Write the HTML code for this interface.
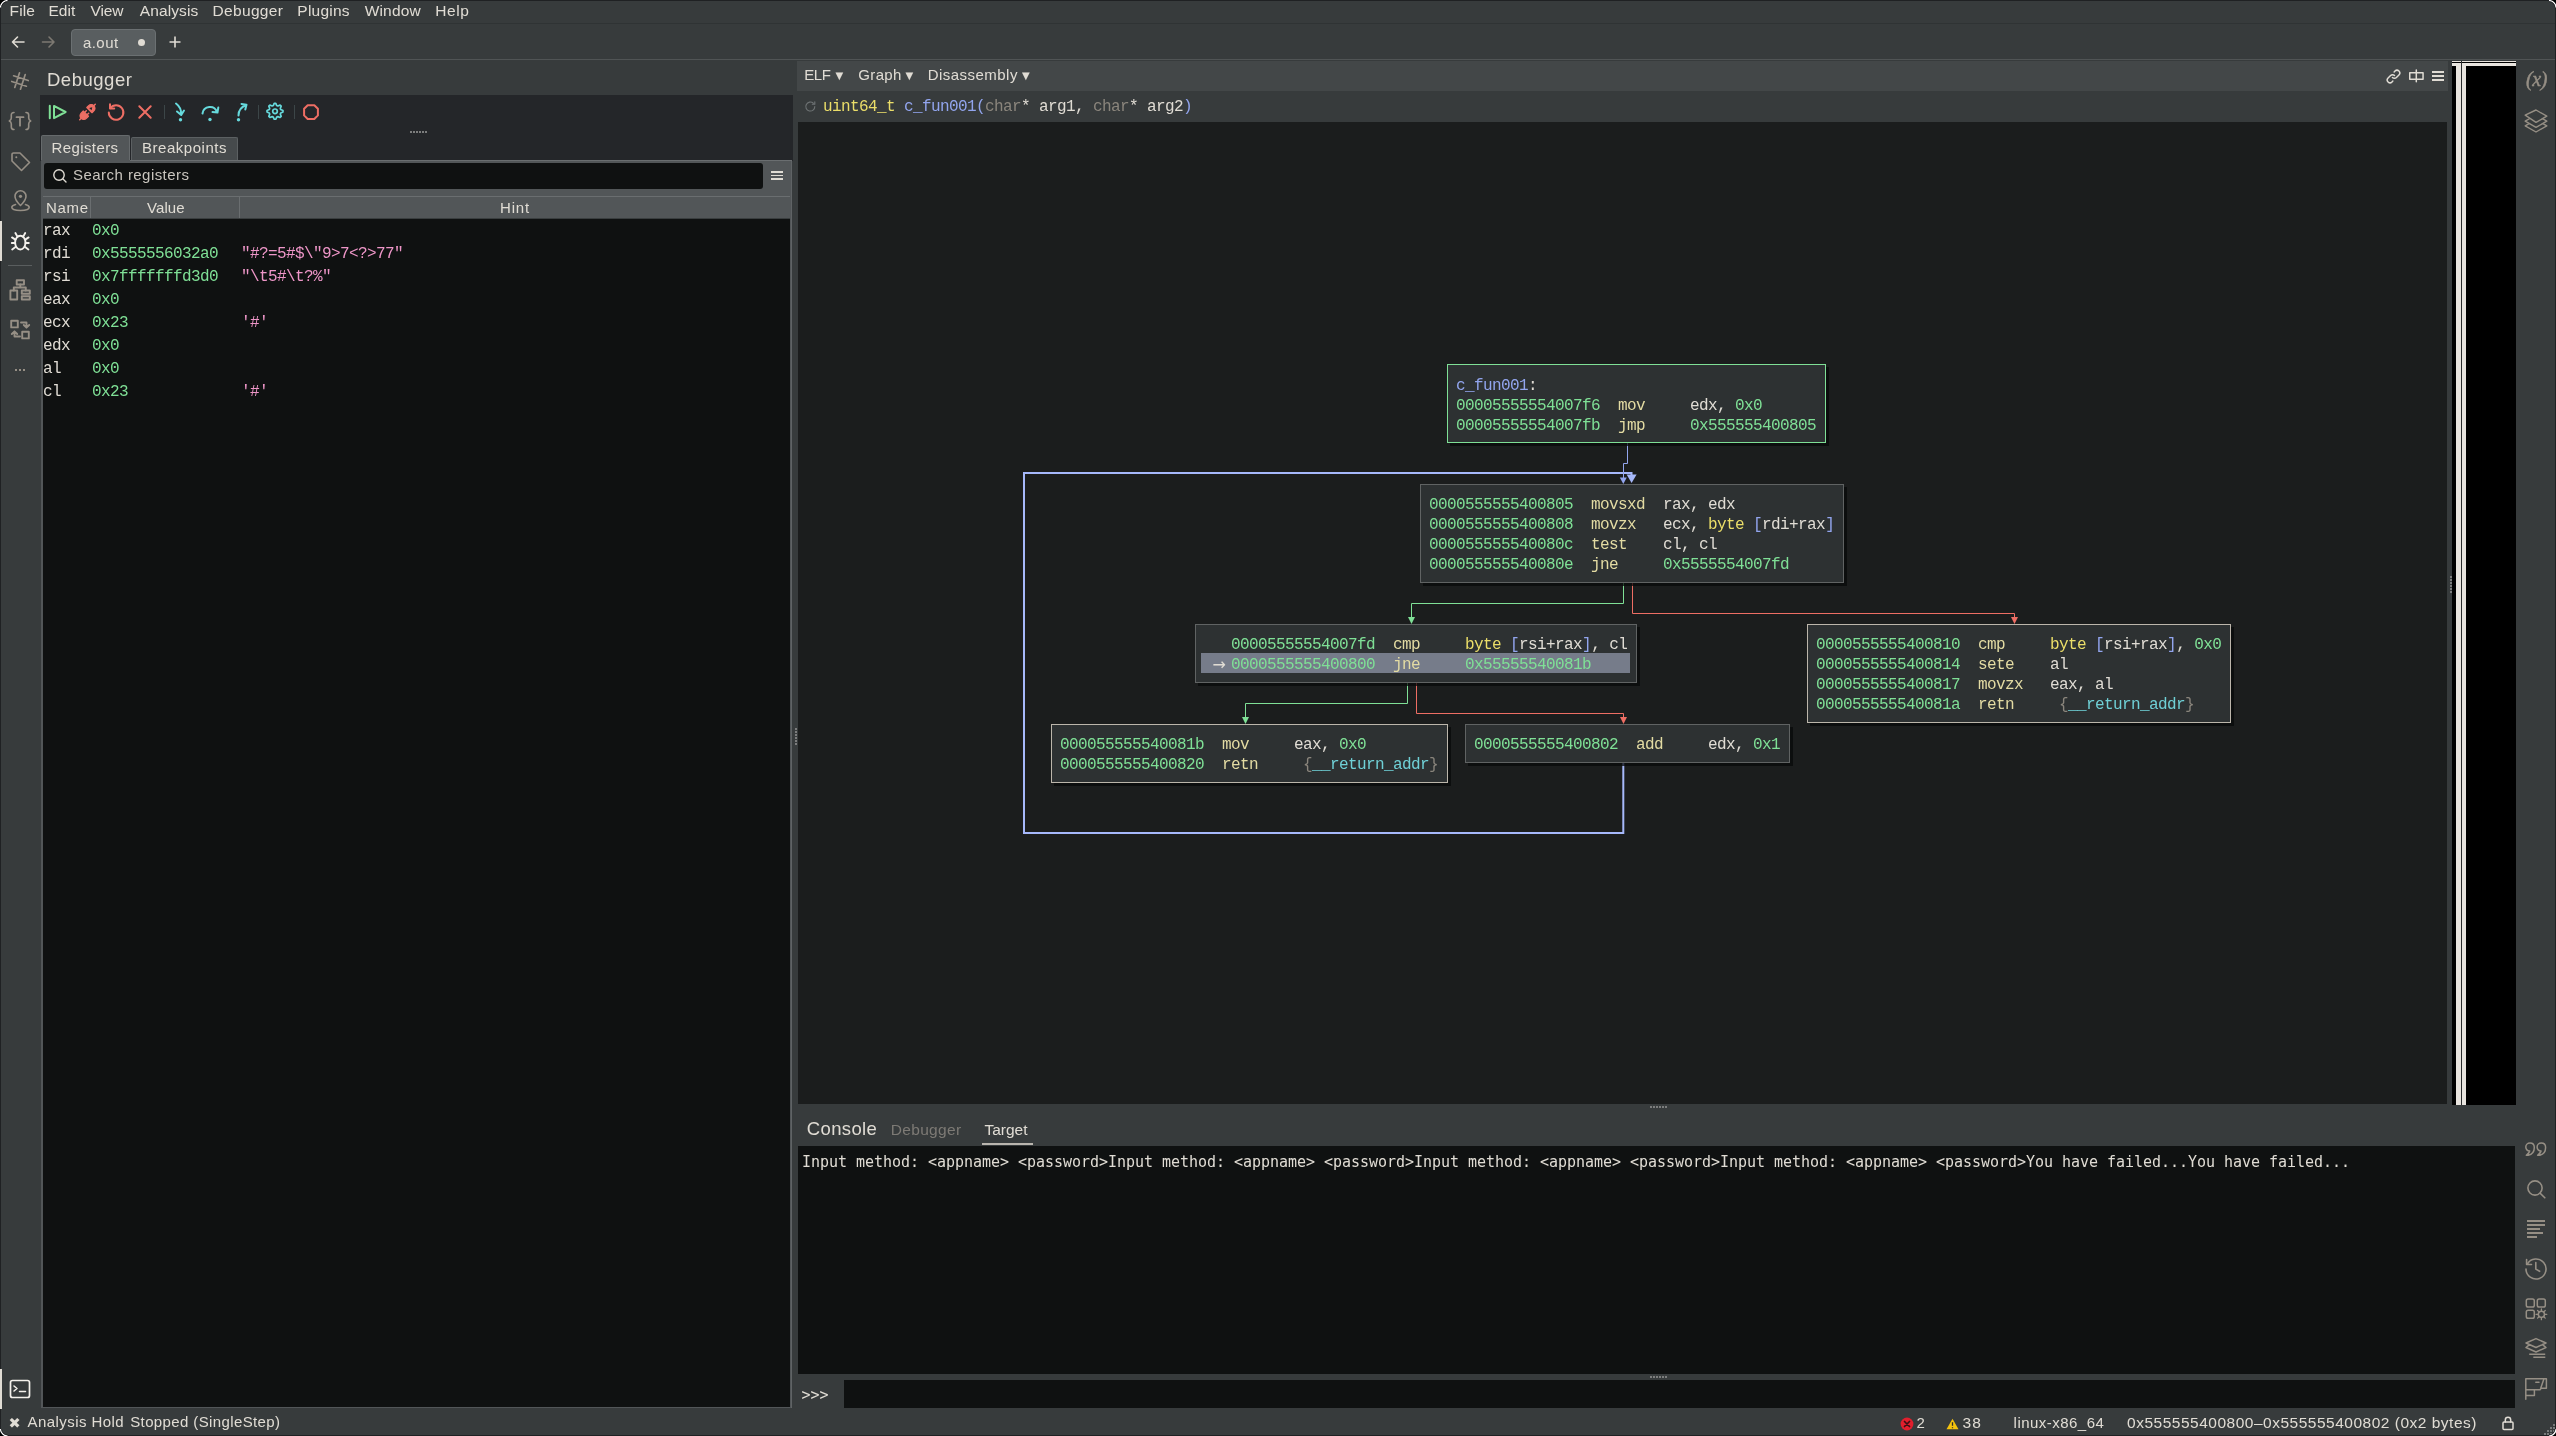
<!DOCTYPE html>
<html lang="en"><head><meta charset="utf-8"><title>Binary Ninja - a.out</title><style>
html,body{margin:0;padding:0;background:#373b3c}
#app{position:relative;width:2556px;height:1436px;overflow:hidden;background:#373b3c}
#txt{left:0;top:0;width:2556px;height:1436px;will-change:transform}
#app div,#app span.s,#app span.m,#app span.c,#app svg{position:absolute}
.s{font-family:"Liberation Sans",sans-serif;line-height:20px;white-space:pre}
.m{font-family:"Liberation Mono",monospace;line-height:20px;white-space:pre;letter-spacing:-0.6px}
.c{font-family:"DejaVu Sans Mono","Liberation Mono",monospace;font-size:15px;line-height:24px;letter-spacing:-0.031px;white-space:pre}
</style></head>
<body><div id="app">
<div style="left:0px;top:0px;width:2556px;height:1436px;background:#373b3c;"></div>
<div style="left:0px;top:23px;width:2556px;height:1px;background:#2f3334;"></div>
<div style="left:0px;top:59px;width:2556px;height:1px;background:#505455;"></div>
<svg style="left:8px;top:32px" width="50" height="20" viewBox="0 0 50 20" fill="none" stroke-width="1.6" stroke-linecap="round" stroke-linejoin="round"><path d="M16 10H4.5M9.5 5L4.5 10l5 5" stroke="#e0dcd4"/><path d="M34.5 10H46M41 5l5 5-5 5" stroke="#7d7972"/></svg>
<div style="left:71px;top:29px;width:85px;height:27px;background:#595e60;border:1px solid #6b7072;border-radius:4px;box-sizing:border-box"></div>
<div style="left:138px;top:38.5px;width:7px;height:7px;background:#e0dcd4;border-radius:50%"></div>
<svg style="left:168px;top:35px" width="14" height="14" viewBox="0 0 14 14" fill="none" stroke="#e0dcd4" stroke-width="1.6"><path d="M7 1.5v11M1.5 7h11"/></svg>
<svg style="left:9px;top:70px" width="22" height="22" viewBox="0 0 22 22" fill="none" stroke="#968f85" stroke-width="1.7" stroke-linecap="round" stroke-linejoin="round" ><g transform="rotate(18 11 11)"><path d="M8 3.300v15.400M14 3.300v15.400M3.300 8h15.400M3.300 14h15.400"/></g></svg>
<svg style="left:8px;top:109px" width="24" height="24" viewBox="0 0 24 24" fill="none" stroke="#968f85" stroke-width="1.6" stroke-linecap="round" stroke-linejoin="round" ><path d="M6 3.5c-2 0-2.7 1-2.7 2.6v3c0 1.4-.6 2.3-2 2.9 1.4.6 2 1.500 2 2.900v3c0 1.600.7 2.600 2.700 2.600M18 3.500c2 0 2.700 1 2.700 2.600v3c0 1.400.6 2.300 2 2.900-1.400.6-2 1.500-2 2.900v3c0 1.600-.7 2.600-2.700 2.600"/><path d="M8.500 8.200h7M12 8.200v8.500" stroke-width="1.8"/></svg>
<svg style="left:9px;top:150px" width="23" height="23" viewBox="0 0 23 23" fill="none" stroke="#968f85" stroke-width="1.6" stroke-linecap="round" stroke-linejoin="round" ><path d="M3 4.500v6.500l9.500 9.500 8-8L11 3H4.500A1.500 1.500 0 0 0 3 4.500z"/><circle cx="7.300" cy="7.300" r="1" fill="#968f85" stroke="none"/></svg>
<svg style="left:9px;top:189px" width="23" height="24" viewBox="0 0 23 24" fill="none" stroke="#968f85" stroke-width="1.6" stroke-linecap="round" stroke-linejoin="round" ><path d="M11.500 16.500s-5.500-5.300-5.500-9.300a5.500 5.500 0 0 1 11 0c0 4-5.500 9.300-5.500 9.300z"/><circle cx="11.500" cy="7.300" r="1.600" fill="#968f85" stroke="none"/><path d="M6.500 15.500C4 16.300 2.800 17.300 2.800 18.300c0 2 3.900 3.200 8.700 3.200s8.700-1.200 8.700-3.200c0-1-1.200-2-3.700-2.800"/></svg>
<svg style="left:9px;top:229px" width="23" height="24" viewBox="0 0 23 24" fill="none" stroke="#f4f1ec" stroke-width="1.9" stroke-linecap="round" stroke-linejoin="round" ><ellipse cx="11.300" cy="13.600" rx="5.200" ry="6.900"/><path d="M6.400 10.600L3 8.400M16.200 10.600l3.400-2.200M6.100 14H2.800M16.500 14h3.300M6.800 17.800L3.200 20.400M15.800 17.800l3.600 2.600M8.400 7.600L6.400 4M14.200 7.600l2-3.600"/></svg>
<div style="left:8px;top:265px;width:24px;height:1px;background:#5a5e5f;"></div>
<svg style="left:8px;top:277px" width="25" height="25" viewBox="0 0 25 25" fill="none" stroke="#968f85" stroke-width="1.9" stroke-linecap="round" stroke-linejoin="round" stroke-linejoin="miter"><rect x="8.700" y="3.300" width="7.300" height="4.200"/><rect x="2.400" y="13.500" width="6.800" height="9"/><rect x="13.800" y="13.500" width="8" height="3.200"/><rect x="13.800" y="19.300" width="8" height="3.200"/><path d="M12.300 7.500v3M5.800 13.500v-3h12v3"/></svg>
<svg style="left:8px;top:317px" width="25" height="25" viewBox="0 0 25 25" fill="none" stroke="#968f85" stroke-width="1.9" stroke-linecap="round" stroke-linejoin="round" stroke-linejoin="miter"><rect x="3.200" y="3.800" width="6.600" height="6.600"/><rect x="14.200" y="14.800" width="6.600" height="6.600"/><path d="M13 5.500h5.500v4.500M15.800 8l2.700 2.700L21.200 8M12 19.500H6.500V15M3.800 17l2.700-2.700L9.200 17"/></svg>
<div style="left:15.2px;top:369.3px;width:2px;height:2px;background:#968f85;"></div>
<div style="left:19.2px;top:369.3px;width:2px;height:2px;background:#968f85;"></div>
<div style="left:23.2px;top:369.3px;width:2px;height:2px;background:#968f85;"></div>
<svg style="left:9px;top:1379px" width="22" height="20" viewBox="0 0 22 20" fill="none" stroke="#f4f1ec" stroke-width="1.7" stroke-linecap="round" stroke-linejoin="round" ><rect x="1.500" y="1.500" width="19" height="17" rx="2"/><path d="M5 7l3 2.500L5 12M10.500 12.500h6" stroke-width="1.500"/></svg>
<div style="left:40px;top:95px;width:753px;height:66px;background:#242629;"></div>
<svg style="left:47px;top:102px" width="22" height="20" viewBox="0 0 22 20" fill="none" stroke="#7fe096" stroke-width="2" stroke-linecap="round" stroke-linejoin="round" stroke-linejoin="miter"><path d="M2.800 3.700v12.600M7 3.900L18.600 10 7 16.100z"/></svg>
<svg style="left:77px;top:101px" width="21" height="22" viewBox="0 0 21 22" fill="none" stroke="#ee6e64" stroke-width="1.6" stroke-linecap="round" stroke-linejoin="round" ><g transform="rotate(-45 10.500 11)"><path d="M5.200 7.300h3v7.400h-3a3.700 3.700 0 0 1 0-7.400zM13.200 7.300h2.600a3.700 3.700 0 0 1 0 7.400h-2.600z" fill="#ee6e64" stroke-width="1.200"/><path d="M8.200 9.300h2.300M8.200 12.700h2.300M-.5 11h2.500M19 11h2.500" stroke-width="1.500"/><path d="M14.600 9.300v3.400l2.600-1.700z" fill="#242629" stroke="none"/></g></svg>
<svg style="left:106px;top:102px" width="20" height="20" viewBox="0 0 20 20" fill="none" stroke="#ee6e64" stroke-width="2" stroke-linecap="round" stroke-linejoin="round" ><path d="M4.200 6.200A7.300 7.300 0 1 1 2.800 10.500"/><path d="M4 2.300v4.200h4.200"/></svg>
<svg style="left:137px;top:104px" width="16" height="16" viewBox="0 0 16 16" fill="none" stroke="#ee6e64" stroke-width="2" stroke-linecap="round" stroke-linejoin="round" ><path d="M2.300 2.300l11.400 11.400M13.700 2.300L2.300 13.700"/></svg>
<div style="left:164px;top:105px;width:1px;height:14px;background:#3c4648;"></div>
<svg style="left:172px;top:101px" width="16" height="22" viewBox="0 0 16 22" fill="none" stroke="#66d9dc" stroke-width="2" stroke-linecap="round" stroke-linejoin="round" ><path d="M4 2.500c4 3 5.500 6.500 5 11M5 10.500l4.200 3.500 2.800-4.500"/><circle cx="8.500" cy="18.700" r="1.700" fill="#66d9dc" stroke="none"/></svg>
<svg style="left:199px;top:103px" width="22" height="20" viewBox="0 0 22 20" fill="none" stroke="#66d9dc" stroke-width="2" stroke-linecap="round" stroke-linejoin="round" ><path d="M3.500 10.500a7.500 7.500 0 0 1 14.500-1.500M13.500 9l5 .5 .8-5"/><circle cx="11" cy="16.500" r="1.700" fill="#66d9dc" stroke="none"/></svg>
<svg style="left:234px;top:101px" width="16" height="22" viewBox="0 0 16 22" fill="none" stroke="#66d9dc" stroke-width="2" stroke-linecap="round" stroke-linejoin="round" ><path d="M4.500 14.500c0-5 2.500-8.500 7.500-10.500M7.500 3l5 .8-1.200 4.700"/><circle cx="4.500" cy="18.700" r="1.700" fill="#66d9dc" stroke="none"/></svg>
<div style="left:258px;top:105px;width:1px;height:14px;background:#3c4648;"></div>
<svg style="left:265px;top:101px" width="20" height="20" viewBox="0 0 20 20" fill="none" stroke="#66d9dc" stroke-width="1.7" stroke-linecap="round" stroke-linejoin="round" ><path d="M17.96 9.52L17.96 11.08L15.74 12.04L15.29 13.13L16.18 15.38L15.08 16.48L12.83 15.59L11.74 16.04L10.78 18.26L9.22 18.26L8.26 16.04L7.17 15.59L4.92 16.48L3.82 15.38L4.71 13.13L4.26 12.04L2.04 11.08L2.04 9.52L4.26 8.56L4.71 7.47L3.82 5.22L4.92 4.12L7.17 5.01L8.26 4.56L9.22 2.34L10.78 2.34L11.74 4.56L12.83 5.01L15.08 4.12L16.18 5.22L15.29 7.47L15.74 8.56z"/><circle cx="10" cy="10.300" r="2.300"/></svg>
<div style="left:294px;top:105px;width:1px;height:14px;background:#3c4648;"></div>
<svg style="left:301px;top:102px" width="20" height="20" viewBox="0 0 20 20" fill="none" stroke="#ee6e64" stroke-width="2" stroke-linecap="round" stroke-linejoin="round" ><path d="M6.700 3.200h6.600l3.600 3.600v6.600l-3.600 3.600H6.700l-3.600-3.600V6.800z"/></svg>
<div style="left:410px;top:131px;width:2px;height:2px;background:#7c7d7d;"></div>
<div style="left:413px;top:131px;width:2px;height:2px;background:#7c7d7d;"></div>
<div style="left:416px;top:131px;width:2px;height:2px;background:#7c7d7d;"></div>
<div style="left:419px;top:131px;width:2px;height:2px;background:#7c7d7d;"></div>
<div style="left:422px;top:131px;width:2px;height:2px;background:#7c7d7d;"></div>
<div style="left:425px;top:131px;width:2px;height:2px;background:#7c7d7d;"></div>
<div style="left:41px;top:135px;width:89px;height:26px;background:#525658;border:1px solid #666a6c;border-bottom:none;box-sizing:border-box;border-radius:2px 2px 0 0"></div>
<div style="left:131px;top:137px;width:107px;height:23px;background:#464a4c;border:1px solid #5c6062;border-bottom:none;box-sizing:border-box;border-radius:2px 2px 0 0"></div>
<div style="left:41px;top:160px;width:751.4px;height:1248px;background:#525658;"></div>
<div style="left:130px;top:160px;width:662.4px;height:1px;background:#6a6e70;"></div>
<div style="left:790.7px;top:161px;width:1.7px;height:1247px;background:#5f6365;"></div>
<div style="left:43px;top:219px;width:747px;height:1188px;background:#0f1111;"></div>
<div style="left:44px;top:163px;width:719px;height:25.5px;background:#0f1111;border-radius:3px"></div>
<svg style="left:52px;top:168px" width="16" height="16" viewBox="0 0 16 16" fill="none" stroke="#e0dcd4" stroke-width="1.4" stroke-linecap="round" stroke-linejoin="round" ><circle cx="7" cy="7" r="5.200"/><path d="M11 11l3 3"/></svg>
<div style="left:771px;top:171.0px;width:12px;height:1.8px;background:#e0dcd4;"></div>
<div style="left:771px;top:174.6px;width:12px;height:1.8px;background:#e0dcd4;"></div>
<div style="left:771px;top:178.2px;width:12px;height:1.8px;background:#e0dcd4;"></div>
<div style="left:43px;top:196px;width:747px;height:1px;background:#6a6e70;"></div>
<div style="left:90px;top:197px;width:1px;height:21px;background:#6a6e70;"></div>
<div style="left:238.5px;top:197px;width:1px;height:21px;background:#6a6e70;"></div>
<div style="left:43px;top:218px;width:747px;height:1px;background:#3a3e3f;"></div>
<div style="left:795px;top:728px;width:2px;height:2px;background:#7c7d7d;"></div>
<div style="left:2450px;top:576px;width:2px;height:2px;background:#7c7d7d;"></div>
<div style="left:795px;top:731px;width:2px;height:2px;background:#7c7d7d;"></div>
<div style="left:2450px;top:579px;width:2px;height:2px;background:#7c7d7d;"></div>
<div style="left:795px;top:734px;width:2px;height:2px;background:#7c7d7d;"></div>
<div style="left:2450px;top:582px;width:2px;height:2px;background:#7c7d7d;"></div>
<div style="left:795px;top:737px;width:2px;height:2px;background:#7c7d7d;"></div>
<div style="left:2450px;top:585px;width:2px;height:2px;background:#7c7d7d;"></div>
<div style="left:795px;top:740px;width:2px;height:2px;background:#7c7d7d;"></div>
<div style="left:2450px;top:588px;width:2px;height:2px;background:#7c7d7d;"></div>
<div style="left:795px;top:743px;width:2px;height:2px;background:#7c7d7d;"></div>
<div style="left:2450px;top:591px;width:2px;height:2px;background:#7c7d7d;"></div>
<div style="left:797px;top:61px;width:1651px;height:30px;background:#434748;"></div>
<svg style="left:2386.2px;top:68.6px" width="15" height="15" viewBox="0 0 18 18" fill="none" stroke="#e0dcd4" stroke-width="1.8" stroke-linecap="round" stroke-linejoin="round" ><path d="M7.800 10.200a3.300 3.300 0 0 0 4.700 0l3-3a3.300 3.300 0 0 0-4.700-4.700l-1 1M10.200 7.800a3.300 3.300 0 0 0-4.700 0l-3 3a3.300 3.300 0 0 0 4.700 4.700l1-1"/></svg>
<svg style="left:2408px;top:68px" width="16" height="16" viewBox="0 0 16 16" fill="none" stroke="#e0dcd4" stroke-width="1.5" stroke-linecap="round" stroke-linejoin="round" stroke-linejoin="miter" stroke-linecap="butt"><path d="M1.750 4.750h13.300v6.600H1.750zM8.300 1.900v11.900"/></svg>
<div style="left:2432px;top:71.1px;width:12px;height:1.8px;background:#e0dcd4;"></div>
<div style="left:2432px;top:75.19999999999999px;width:12px;height:1.8px;background:#e0dcd4;"></div>
<div style="left:2432px;top:79.3px;width:12px;height:1.8px;background:#e0dcd4;"></div>
<svg style="left:804px;top:100px" width="13" height="13" viewBox="0 0 13 13" fill="none" stroke="#6f7475" stroke-width="1.1" stroke-linecap="round" stroke-linejoin="round" ><path d="M10.800 6.500a4.500 4.500 0 1 1-1.500-3.300M10.800 1.800v2.500H8.300"/></svg>
<div style="left:798px;top:121.7px;width:1649px;height:982.3px;background:#1b1d1d;"></div>
<div style="left:2452px;top:61px;width:64px;height:1044px;background:#000;"></div>
<div style="left:2452px;top:61px;width:64px;height:1px;background:#e8e4de;"></div>
<div style="left:2452px;top:63px;width:64px;height:3px;background:#e8e4de;"></div>
<div style="left:2456px;top:63px;width:4.5px;height:1042px;background:#e8e4de;"></div>
<div style="left:2461.7px;top:63px;width:4.4px;height:1042px;background:#e8e4de;"></div>
<div style="left:2460.5px;top:61px;width:1.2px;height:1044px;background:#2a2c2d;"></div>
<svg style="left:0;top:0" width="2556" height="1436" viewBox="0 0 2556 1436" fill="none"><path d="M1623.300 763V833H1024V473H1631.500V476" stroke="#a6b8fa" stroke-width="2"/><path d="M1626.600 474.500h10l-5 8.500z" fill="#a6b8fa"/><path d="M1627.500 443v20.500h-4v15" stroke="#92a5ee" stroke-width="1"/><path d="M1619.800 477.500h7l-3.500 6.500z" fill="#92a5ee"/><path d="M1623.500 583v20.500H1411.500v14" stroke="#7fe096" stroke-width="1"/><path d="M1408 617h7l-3.500 7z" fill="#7fe096"/><path d="M1632.500 583v30.500H2014.500v4" stroke="#ee6e64" stroke-width="1"/><path d="M2011 617h7l-3.500 7z" fill="#ee6e64"/><path d="M1407.500 683v20.500H1245.500v14" stroke="#7fe096" stroke-width="1"/><path d="M1242 717h7l-3.500 7z" fill="#7fe096"/><path d="M1416.500 683v30.500H1623.500v4" stroke="#ee6e64" stroke-width="1"/><path d="M1620 717h7l-3.500 7z" fill="#ee6e64"/></svg>
<div style="left:1447px;top:364px;width:379px;height:79px;background:#2d3132;border:1px solid #7fe096;box-sizing:border-box;box-shadow:3px 3px 0 rgba(8,9,9,.75);"></div>
<div style="left:1420px;top:484px;width:424px;height:99px;background:#2d3132;border:1px solid #606363;box-sizing:border-box;box-shadow:3px 3px 0 rgba(8,9,9,.75);"></div>
<div style="left:1195px;top:624px;width:442px;height:59px;background:#2d3132;border:1px solid #606363;box-sizing:border-box;box-shadow:3px 3px 0 rgba(8,9,9,.75);"></div>
<div style="left:1201px;top:653px;width:429px;height:20px;background:#767c8a;"></div>
<div style="left:1807px;top:624px;width:423.5px;height:99px;background:#2d3132;border:1px solid #bcb6ab;box-sizing:border-box;box-shadow:3px 3px 0 rgba(8,9,9,.75);"></div>
<div style="left:1051px;top:724px;width:397px;height:59px;background:#2d3132;border:1px solid #bcb6ab;box-sizing:border-box;box-shadow:3px 3px 0 rgba(8,9,9,.75);"></div>
<div style="left:1465px;top:724px;width:325px;height:39px;background:#2d3132;border:1px solid #606363;box-sizing:border-box;box-shadow:3px 3px 0 rgba(8,9,9,.75);"></div>
<svg style="left:2524px;top:109px" width="24" height="24" viewBox="0 0 24 24" fill="none" stroke="#968f85" stroke-width="1.4" stroke-linecap="round" stroke-linejoin="round" ><path d="M12 10.600l10.800 6.200L12 23 1.200 16.800z" fill="#373b3c"/><path d="M12 6l10.800 6.200L12 18.400 1.200 12.200z" fill="#373b3c"/><path d="M12 1l10.800 6.200L12 13.400 1.200 6.200z" fill="#373b3c"/></svg>
<svg style="left:2525px;top:1141.5px" width="22" height="15" viewBox="0 0 22 15" fill="none" stroke="#968f85" stroke-width="1.5" stroke-linecap="round" stroke-linejoin="round" ><path d="M5 1C7.800 1 9.300 3 9.300 5.500C9.300 9.500 7 12.500 3.200 13.300L1.300 13.300C3 12 4.300 10.700 4.700 9C2.400 9 .8 7.300 .8 5C.8 2.800 2.500 1 5 1Z"/><path d="M5 1C7.800 1 9.300 3 9.300 5.500C9.300 9.500 7 12.500 3.200 13.300L1.300 13.300C3 12 4.300 10.700 4.700 9C2.400 9 .8 7.300 .8 5C.8 2.800 2.500 1 5 1Z" transform="translate(11.300 0)"/></svg>
<svg style="left:2526px;top:1179px" width="21" height="21" viewBox="0 0 21 21" fill="none" stroke="#968f85" stroke-width="1.6" stroke-linecap="round" stroke-linejoin="round" ><circle cx="9" cy="9" r="7.100"/><path d="M14.200 14.200l4.600 4.600"/></svg>
<div style="left:2527px;top:1220px;width:18px;height:1.8px;background:#968f85;"></div>
<div style="left:2527px;top:1224px;width:18px;height:1.8px;background:#968f85;"></div>
<div style="left:2527px;top:1228px;width:13px;height:1.8px;background:#968f85;"></div>
<div style="left:2527px;top:1232px;width:16px;height:1.8px;background:#968f85;"></div>
<div style="left:2527px;top:1236px;width:10px;height:1.8px;background:#968f85;"></div>
<svg style="left:2524px;top:1257px" width="24" height="24" viewBox="0 0 24 24" fill="none" stroke="#968f85" stroke-width="1.6" stroke-linecap="round" stroke-linejoin="round" ><path d="M3.340 7A10 10 0 1 1 2 12"/><path d="M2.600 2.600v4.900h4.900M11.800 5.500v6.600l3.800 2.200"/></svg>
<svg style="left:2525px;top:1298px" width="24" height="24" viewBox="0 0 24 24" fill="none" stroke="#968f85" stroke-width="1.5" stroke-linecap="round" stroke-linejoin="round" ><rect x="1.300" y="1.100" width="8" height="8" rx="1.800"/><rect x="12.300" y="1.100" width="8" height="8" rx="1.800"/><rect x="1.300" y="12.200" width="8" height="8" rx="1.800"/><circle cx="16.4" cy="16.3" r="3.100"/><path d="M19.50 16.30L21.80 16.30M18.59 18.49L20.22 20.12M16.40 19.40L16.40 21.70M14.21 18.49L12.58 20.12M13.30 16.30L11.00 16.30M14.21 14.11L12.58 12.48M16.40 13.20L16.40 10.90M18.59 14.11L20.22 12.48" stroke-width="1.300"/></svg>
<svg style="left:2525px;top:1337px" width="24" height="24" viewBox="0 0 24 24" fill="none" stroke="#968f85" stroke-width="1.5" stroke-linecap="round" stroke-linejoin="round" ><path d="M11 1.600L21 6 11 10.500 1 6zM4.500 7.600L1 10.500 11 15l10-4.500-3.500-2.900"/><path d="M4.200 17.200h16M8.300 20.200h12" stroke-linecap="butt"/></svg>
<svg style="left:2524px;top:1377px" width="24" height="24" viewBox="0 0 24 24" fill="none" stroke="#968f85" stroke-width="1.5" stroke-linecap="round" stroke-linejoin="round" stroke-linejoin="miter" stroke-linecap="butt"><path d="M1.800 12.800V1.800H22.400v9.400h-5.200L16 12.800zM19.800 2.200L16.800 11M11.800 5.200h3.200M1.800 12.800v9.400M1.800 18.400h8.600v-5.600"/></svg>
<div style="left:1650px;top:1106px;width:2px;height:2px;background:#7c7d7d;"></div>
<div style="left:1650px;top:1376px;width:2px;height:2px;background:#7c7d7d;"></div>
<div style="left:1653px;top:1106px;width:2px;height:2px;background:#7c7d7d;"></div>
<div style="left:1653px;top:1376px;width:2px;height:2px;background:#7c7d7d;"></div>
<div style="left:1656px;top:1106px;width:2px;height:2px;background:#7c7d7d;"></div>
<div style="left:1656px;top:1376px;width:2px;height:2px;background:#7c7d7d;"></div>
<div style="left:1659px;top:1106px;width:2px;height:2px;background:#7c7d7d;"></div>
<div style="left:1659px;top:1376px;width:2px;height:2px;background:#7c7d7d;"></div>
<div style="left:1662px;top:1106px;width:2px;height:2px;background:#7c7d7d;"></div>
<div style="left:1662px;top:1376px;width:2px;height:2px;background:#7c7d7d;"></div>
<div style="left:1665px;top:1106px;width:2px;height:2px;background:#7c7d7d;"></div>
<div style="left:1665px;top:1376px;width:2px;height:2px;background:#7c7d7d;"></div>
<div style="left:981.8px;top:1143.2px;width:50.8px;height:1.7px;background:#b9b5ae;"></div>
<div style="left:798px;top:1146px;width:1717px;height:228px;background:#0f1111;"></div>
<div style="left:844px;top:1380px;width:1671px;height:28px;background:#0f1111;"></div>
<svg style="left:1900px;top:1416.500px" width="14" height="14" viewBox="0 0 14 14"><circle cx="7" cy="7" r="6.400" fill="#e11f2d"/><path d="M4.500 4.500l5 5M9.500 4.500l-5 5" stroke="#3a1014" stroke-width="1.700" stroke-linecap="round"/></svg>
<svg style="left:1946px;top:1417.500px" width="13" height="12" viewBox="0 0 13 12"><path d="M6.500 .8L12.500 11.300H.5z" fill="#f4c20d"/><path d="M6.500 4.200v3.600M6.500 9.200v1" stroke="#2a2a2a" stroke-width="1.300"/></svg>
<svg style="left:2501px;top:1415px" width="14" height="16" viewBox="0 0 14 16" fill="none" stroke="#e0dcd4" stroke-width="1.5" stroke-linecap="round" stroke-linejoin="round" ><rect x="2" y="7" width="10" height="7.500" rx="1"/><path d="M4.300 7V5a2.700 2.700 0 0 1 5.400 0v2"/></svg>
<div style="left:2553px;top:1424px;width:2px;height:2px;background:#787b7b;"></div>
<div style="left:2553px;top:1427px;width:2px;height:2px;background:#787b7b;"></div>
<div style="left:2550px;top:1427px;width:2px;height:2px;background:#787b7b;"></div>
<div style="left:2553px;top:1430px;width:2px;height:2px;background:#787b7b;"></div>
<div style="left:2550px;top:1430px;width:2px;height:2px;background:#787b7b;"></div>
<div style="left:2547px;top:1430px;width:2px;height:2px;background:#787b7b;"></div>
<div style="left:2553px;top:1433px;width:2px;height:2px;background:#787b7b;"></div>
<div style="left:2550px;top:1433px;width:2px;height:2px;background:#787b7b;"></div>
<div style="left:2547px;top:1433px;width:2px;height:2px;background:#787b7b;"></div>
<div style="left:2544px;top:1433px;width:2px;height:2px;background:#787b7b;"></div>
<div style="left:0px;top:0px;width:2556px;height:1px;background:#1f2123;"></div>
<div style="left:0px;top:1435px;width:2556px;height:1px;background:#1f2123;"></div>
<div style="left:0px;top:0px;width:1px;height:1436px;background:#1f2123;"></div>
<div style="left:2555px;top:0px;width:1px;height:1436px;background:#1f2123;"></div>
<svg style="left:0px;top:0px" width="7.500" height="7.500" viewBox="0 0 9 9"><g transform="rotate(0 4.500 4.500)"><path d="M0 0h9A9 9 0 0 0 0 9z" fill="#000"/><path d="M.7 9A8.300 8.300 0 0 1 9 .7" fill="none" stroke="#fff" stroke-width="1.600"/><path d="M1.900 9A7.100 7.100 0 0 1 9 1.900" fill="none" stroke="#1f2123" stroke-width="1"/></g></svg>
<svg style="left:2548.5px;top:0px" width="7.500" height="7.500" viewBox="0 0 9 9"><g transform="rotate(90 4.500 4.500)"><path d="M0 0h9A9 9 0 0 0 0 9z" fill="#000"/><path d="M.7 9A8.300 8.300 0 0 1 9 .7" fill="none" stroke="#fff" stroke-width="1.600"/><path d="M1.900 9A7.100 7.100 0 0 1 9 1.900" fill="none" stroke="#1f2123" stroke-width="1"/></g></svg>
<svg style="left:2548.5px;top:1428.5px" width="7.500" height="7.500" viewBox="0 0 9 9"><g transform="rotate(180 4.500 4.500)"><path d="M0 0h9A9 9 0 0 0 0 9z" fill="#000"/><path d="M.7 9A8.300 8.300 0 0 1 9 .7" fill="none" stroke="#fff" stroke-width="1.600"/><path d="M1.900 9A7.100 7.100 0 0 1 9 1.900" fill="none" stroke="#1f2123" stroke-width="1"/></g></svg>
<svg style="left:0px;top:1428.5px" width="7.500" height="7.500" viewBox="0 0 9 9"><g transform="rotate(270 4.500 4.500)"><path d="M0 0h9A9 9 0 0 0 0 9z" fill="#000"/><path d="M.7 9A8.300 8.300 0 0 1 9 .7" fill="none" stroke="#fff" stroke-width="1.600"/><path d="M1.900 9A7.100 7.100 0 0 1 9 1.900" fill="none" stroke="#1f2123" stroke-width="1"/></g></svg>
<div style="left:0.4px;top:221px;width:1.7px;height:40px;background:#e0dcd4;"></div>
<div style="left:0.4px;top:1369px;width:1.7px;height:40px;background:#e0dcd4;"></div>
<div id="txt">
<span class="s" style="left:9.53px;top:0.70px;font-size:15.5px;color:#e0dcd4;letter-spacing:0.162px;">File</span>
<span class="s" style="left:48.53px;top:0.70px;font-size:15.5px;color:#e0dcd4;letter-spacing:-0.008px;">Edit</span>
<span class="s" style="left:90.53px;top:0.70px;font-size:15.5px;color:#e0dcd4;letter-spacing:-0.089px;">View</span>
<span class="s" style="left:139.87px;top:0.70px;font-size:15.5px;color:#e0dcd4;letter-spacing:0.096px;">Analysis</span>
<span class="s" style="left:212.43px;top:0.70px;font-size:15.5px;color:#e0dcd4;letter-spacing:0.35px;">Debugger</span>
<span class="s" style="left:297.33px;top:0.70px;font-size:15.5px;color:#e0dcd4;letter-spacing:0.232px;">Plugins</span>
<span class="s" style="left:364.73px;top:0.70px;font-size:15.5px;color:#e0dcd4;letter-spacing:0.16px;">Window</span>
<span class="s" style="left:435.33px;top:0.70px;font-size:15.5px;color:#e0dcd4;letter-spacing:0.581px;">Help</span>
<span class="s" style="left:82.96px;top:32.50px;font-size:15px;color:#e0dcd4;letter-spacing:0.446px;">a.out</span>
<span class="s" style="left:46.98px;top:69.50px;font-size:18.5px;color:#e0dcd4;letter-spacing:0.524px;">Debugger</span>
<span class="s" style="left:51.47px;top:137.80px;font-size:15px;color:#e0dcd4;letter-spacing:0.402px;">Registers</span>
<span class="s" style="left:142.07px;top:138.00px;font-size:15px;color:#e0dcd4;letter-spacing:0.516px;">Breakpoints</span>
<span class="s" style="left:73.12px;top:165.20px;font-size:15px;color:#c9c5be;letter-spacing:0.441px;">Search registers</span>
<span class="s" style="left:46.07px;top:197.60px;font-size:15px;color:#e0dcd4;letter-spacing:0.662px;">Name</span>
<span class="s" style="left:146.93px;top:197.60px;font-size:15px;color:#e0dcd4;letter-spacing:0.117px;">Value</span>
<span class="s" style="left:500.07px;top:197.60px;font-size:15px;color:#e0dcd4;letter-spacing:0.789px;">Hint</span>
<span class="m" style="left:43px;top:220.60px;font-size:16px;"><span style="color:#e0dcd4">rax</span></span>
<span class="m" style="left:92px;top:220.60px;font-size:16px;"><span style="color:#7fe096">0x0</span></span>
<span class="m" style="left:43px;top:243.60px;font-size:16px;"><span style="color:#e0dcd4">rdi</span></span>
<span class="m" style="left:92px;top:243.60px;font-size:16px;"><span style="color:#7fe096">0x5555556032a0</span></span>
<span class="m" style="left:241px;top:243.60px;font-size:16px;"><span style="color:#ee96c8">"#?=5#$\"9&gt;7&lt;?&gt;77"</span></span>
<span class="m" style="left:43px;top:266.60px;font-size:16px;"><span style="color:#e0dcd4">rsi</span></span>
<span class="m" style="left:92px;top:266.60px;font-size:16px;"><span style="color:#7fe096">0x7fffffffd3d0</span></span>
<span class="m" style="left:241px;top:266.60px;font-size:16px;"><span style="color:#ee96c8">"\t5#\t?%"</span></span>
<span class="m" style="left:43px;top:289.60px;font-size:16px;"><span style="color:#e0dcd4">eax</span></span>
<span class="m" style="left:92px;top:289.60px;font-size:16px;"><span style="color:#7fe096">0x0</span></span>
<span class="m" style="left:43px;top:312.60px;font-size:16px;"><span style="color:#e0dcd4">ecx</span></span>
<span class="m" style="left:92px;top:312.60px;font-size:16px;"><span style="color:#7fe096">0x23</span></span>
<span class="m" style="left:241px;top:312.60px;font-size:16px;"><span style="color:#ee96c8">'#'</span></span>
<span class="m" style="left:43px;top:335.60px;font-size:16px;"><span style="color:#e0dcd4">edx</span></span>
<span class="m" style="left:92px;top:335.60px;font-size:16px;"><span style="color:#7fe096">0x0</span></span>
<span class="m" style="left:43px;top:358.60px;font-size:16px;"><span style="color:#e0dcd4">al</span></span>
<span class="m" style="left:92px;top:358.60px;font-size:16px;"><span style="color:#7fe096">0x0</span></span>
<span class="m" style="left:43px;top:381.60px;font-size:16px;"><span style="color:#e0dcd4">cl</span></span>
<span class="m" style="left:92px;top:381.60px;font-size:16px;"><span style="color:#7fe096">0x23</span></span>
<span class="m" style="left:241px;top:381.60px;font-size:16px;"><span style="color:#ee96c8">'#'</span></span>
<span class="s" style="left:804.27px;top:65.10px;font-size:15px;color:#e0dcd4;letter-spacing:-0.489px;">ELF</span>
<span class="s" style="left:835.5999999999999px;top:66.3px;font-size:10px;font-family:'DejaVu Sans',sans-serif;color:#e0dcd4">▼</span>
<span class="s" style="left:858.25px;top:65.10px;font-size:15px;color:#e0dcd4;letter-spacing:0.36px;">Graph</span>
<span class="s" style="left:905.5px;top:66.3px;font-size:10px;font-family:'DejaVu Sans',sans-serif;color:#e0dcd4">▼</span>
<span class="s" style="left:927.67px;top:65.10px;font-size:15px;color:#e0dcd4;letter-spacing:0.474px;">Disassembly</span>
<span class="s" style="left:1022.0px;top:66.3px;font-size:10px;font-family:'DejaVu Sans',sans-serif;color:#e0dcd4">▼</span>
<span class="m" style="left:823px;top:97.30px;font-size:16px;"><span style="color:#ebde69">uint64_t</span><span style="color:#e0dcd4"> </span><span style="color:#92a5ee">c_fun001(</span><span style="color:#8a857c">char</span><span style="color:#e0dcd4">* arg1, </span><span style="color:#8a857c">char</span><span style="color:#e0dcd4">* arg2</span><span style="color:#92a5ee">)</span></span>
<span class="m" style="left:1456px;top:375.50px;font-size:16px;"><span style="color:#92a5ee">c_fun001</span><span style="color:#e0dcd4">:</span></span>
<span class="m" style="left:1456px;top:395.50px;font-size:16px;"><span style="color:#7fe096">00005555554007f6</span><span style="color:#e0dcd4">  </span><span style="color:#e3dba3">mov     </span><span style="color:#e0dcd4">edx, </span><span style="color:#7fe096">0x0</span></span>
<span class="m" style="left:1456px;top:415.50px;font-size:16px;"><span style="color:#7fe096">00005555554007fb</span><span style="color:#e0dcd4">  </span><span style="color:#e3dba3">jmp     </span><span style="color:#7fe096">0x555555400805</span></span>
<span class="m" style="left:1429px;top:495.20px;font-size:16px;"><span style="color:#7fe096">0000555555400805</span><span style="color:#e0dcd4">  </span><span style="color:#e3dba3">movsxd  </span><span style="color:#e0dcd4">rax, edx</span></span>
<span class="m" style="left:1429px;top:515.20px;font-size:16px;"><span style="color:#7fe096">0000555555400808</span><span style="color:#e0dcd4">  </span><span style="color:#e3dba3">movzx   </span><span style="color:#e0dcd4">ecx, </span><span style="color:#ebde69">byte </span><span style="color:#92a5ee">[</span><span style="color:#e0dcd4">rdi+rax</span><span style="color:#92a5ee">]</span></span>
<span class="m" style="left:1429px;top:535.20px;font-size:16px;"><span style="color:#7fe096">000055555540080c</span><span style="color:#e0dcd4">  </span><span style="color:#e3dba3">test    </span><span style="color:#e0dcd4">cl, cl</span></span>
<span class="m" style="left:1429px;top:555.20px;font-size:16px;"><span style="color:#7fe096">000055555540080e</span><span style="color:#e0dcd4">  </span><span style="color:#e3dba3">jne     </span><span style="color:#7fe096">0x5555554007fd</span></span>
<span class="m" style="left:1231px;top:635.10px;font-size:16px;"><span style="color:#7fe096">00005555554007fd</span><span style="color:#e0dcd4">  </span><span style="color:#e3dba3">cmp     </span><span style="color:#ebde69">byte </span><span style="color:#92a5ee">[</span><span style="color:#e0dcd4">rsi+rax</span><span style="color:#92a5ee">]</span><span style="color:#e0dcd4">, cl</span></span>
<span style="position:absolute;left:1212.5px;top:655px;font:16px 'DejaVu Sans',sans-serif;color:#e0dcd4">→</span>
<span class="m" style="left:1231px;top:655.10px;font-size:16px;"><span style="color:#7fe096">0000555555400800</span><span style="color:#e0dcd4">  </span><span style="color:#e3dba3">jne     </span><span style="color:#7fe096">0x55555540081b</span></span>
<span class="m" style="left:1816px;top:635.10px;font-size:16px;"><span style="color:#7fe096">0000555555400810</span><span style="color:#e0dcd4">  </span><span style="color:#e3dba3">cmp     </span><span style="color:#ebde69">byte </span><span style="color:#92a5ee">[</span><span style="color:#e0dcd4">rsi+rax</span><span style="color:#92a5ee">]</span><span style="color:#e0dcd4">, </span><span style="color:#7fe096">0x0</span></span>
<span class="m" style="left:1816px;top:655.10px;font-size:16px;"><span style="color:#7fe096">0000555555400814</span><span style="color:#e0dcd4">  </span><span style="color:#e3dba3">sete    </span><span style="color:#e0dcd4">al</span></span>
<span class="m" style="left:1816px;top:675.10px;font-size:16px;"><span style="color:#7fe096">0000555555400817</span><span style="color:#e0dcd4">  </span><span style="color:#e3dba3">movzx   </span><span style="color:#e0dcd4">eax, al</span></span>
<span class="m" style="left:1816px;top:695.10px;font-size:16px;"><span style="color:#7fe096">000055555540081a</span><span style="color:#e0dcd4">  </span><span style="color:#e3dba3">retn    </span><span style="color:#8a857c"> {</span><span style="color:#6fd0d6">__return_addr</span><span style="color:#8a857c">}</span></span>
<span class="m" style="left:1060px;top:735.10px;font-size:16px;"><span style="color:#7fe096">000055555540081b</span><span style="color:#e0dcd4">  </span><span style="color:#e3dba3">mov     </span><span style="color:#e0dcd4">eax, </span><span style="color:#7fe096">0x0</span></span>
<span class="m" style="left:1060px;top:755.10px;font-size:16px;"><span style="color:#7fe096">0000555555400820</span><span style="color:#e0dcd4">  </span><span style="color:#e3dba3">retn    </span><span style="color:#8a857c"> {</span><span style="color:#6fd0d6">__return_addr</span><span style="color:#8a857c">}</span></span>
<span class="m" style="left:1474px;top:735.10px;font-size:16px;"><span style="color:#7fe096">0000555555400802</span><span style="color:#e0dcd4">  </span><span style="color:#e3dba3">add     </span><span style="color:#e0dcd4">edx, </span><span style="color:#7fe096">0x1</span></span>
<span class="s" style="left:2526px;top:67.5px;font-size:20px;line-height:22px;font-style:italic;font-family:'Liberation Serif',serif;color:#968f85;letter-spacing:-0.4px;-webkit-text-stroke:0.45px #968f85">(x)</span>
<span class="s" style="left:806.86px;top:1119.10px;font-size:18.5px;color:#e0dcd4;letter-spacing:0.348px;">Console</span>
<span class="s" style="left:890.73px;top:1119.80px;font-size:15.5px;color:#7d7a75;letter-spacing:0.336px;">Debugger</span>
<span class="s" style="left:984.45px;top:1119.80px;font-size:15.5px;color:#e0dcd4;letter-spacing:-0.007px;">Target</span>
<span class="c" style="left:802px;top:1149.500px;color:#e0dcd4">Input method: &lt;appname&gt; &lt;password&gt;Input method: &lt;appname&gt; &lt;password&gt;Input method: &lt;appname&gt; &lt;password&gt;Input method: &lt;appname&gt; &lt;password&gt;You have failed...You have failed...</span>
<span class="c" style="left:801.500px;top:1383px;font-size:15px;color:#e0dcd4">&gt;&gt;&gt;</span>
<span class="s" style="left:8.6px;top:1413.30px;font-size:14.5px;color:#e0dcd4;letter-spacing:0.0px;font-family:'DejaVu Sans',sans-serif">✖</span>
<span class="s" style="left:27.57px;top:1412.30px;font-size:15px;color:#e0dcd4;letter-spacing:0.435px;">Analysis Hold</span>
<span class="s" style="left:130.22px;top:1412.30px;font-size:15px;color:#e0dcd4;letter-spacing:0.38px;">Stopped (SingleStep)</span>
<span class="s" style="left:1916.45px;top:1412.50px;font-size:15px;color:#e0dcd4;letter-spacing:-0.033px;">2</span>
<span class="s" style="left:1962.41px;top:1412.50px;font-size:15.5px;color:#e0dcd4;letter-spacing:1.123px;">38</span>
<span class="s" style="left:2013.59px;top:1412.50px;font-size:15px;color:#e0dcd4;letter-spacing:0.472px;">linux-x86_64</span>
<span class="s" style="left:2127.09px;top:1412.50px;font-size:15.5px;color:#e0dcd4;letter-spacing:0.504px;">0x555555400800–0x555555400802 (0x2 bytes)</span>
</div>
</div></body></html>
